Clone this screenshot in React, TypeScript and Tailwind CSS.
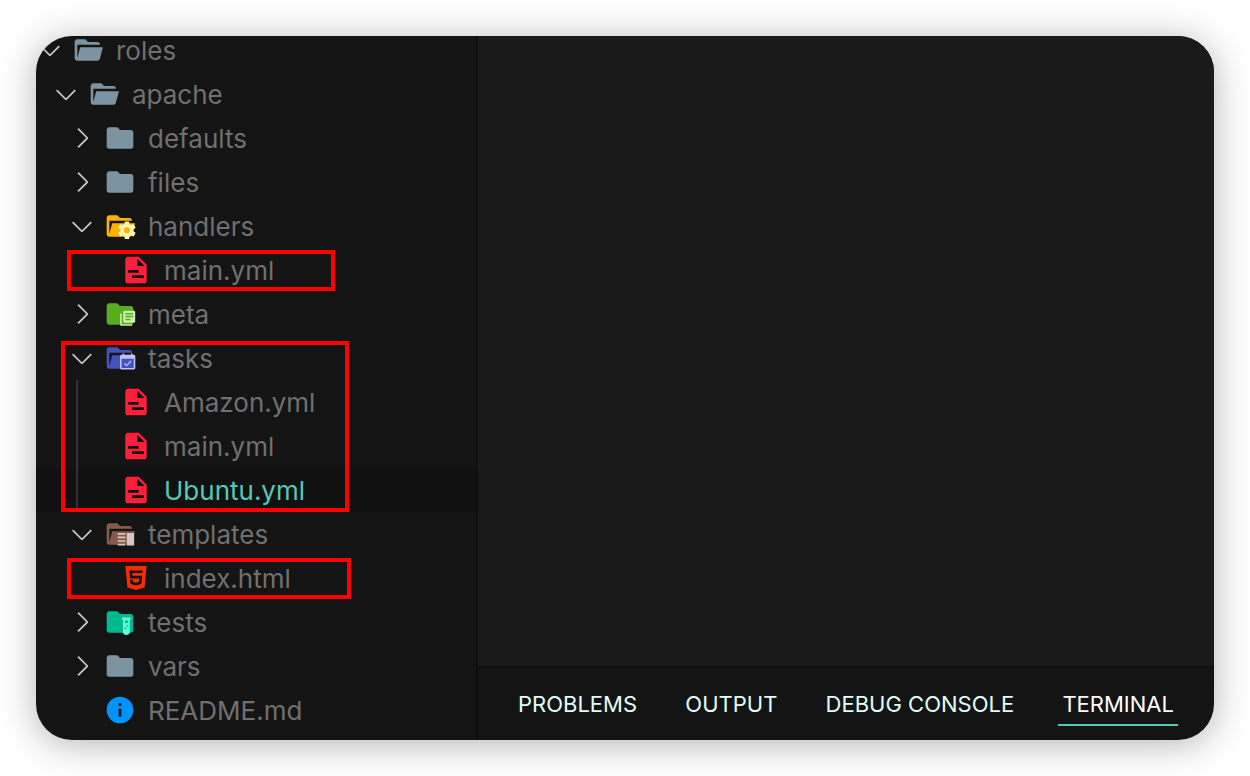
import React, { useState } from 'react';
import clsx from 'clsx';

type IconName =
  | 'folder' | 'folder-open' | 'handlers' | 'meta' | 'tasks' | 'templates' | 'tests' | 'yaml' | 'html' | 'readme';

interface TreeNode {
  name: string;
  icon: IconName;
  open?: boolean;
  leaf?: boolean;
  selected?: boolean;
  guide?: boolean;
  frame?: string;
  children?: TreeNode[];
}

const FOLDER = 'M10 4H4c-1.11 0-2 .89-2 2v12a2 2 0 0 0 2 2h16a2 2 0 0 0 2-2V8c0-1.11-.9-2-2-2h-8l-2-2z';
const FOLDER_OPEN =
  'M19 20H4c-1.11 0-2-.9-2-2V6c0-1.11.89-2 2-2h6l2 2h7a2 2 0 0 1 2 2H4v10l2.14-8h17.07l-2.28 8.5c-.23.87-1.01 1.5-1.93 1.5z';
const COG =
  'M12 15.5A3.5 3.5 0 0 1 8.5 12 3.5 3.5 0 0 1 12 8.5a3.5 3.5 0 0 1 3.5 3.5 3.5 3.5 0 0 1-3.5 3.5m7.43-2.53c.04-.32.07-.64.07-.97 0-.33-.03-.66-.07-1l2.11-1.63c.19-.15.24-.42.12-.64l-2-3.46c-.12-.22-.39-.31-.61-.22l-2.49 1c-.52-.39-1.06-.73-1.69-.98l-.37-2.65A.506.506 0 0 0 14 2h-4c-.25 0-.46.18-.5.42l-.37 2.65c-.63.25-1.17.59-1.69.98l-2.49-1c-.22-.09-.49 0-.61.22l-2 3.46c-.13.22-.07.49.12.64L4.57 11c-.04.34-.07.67-.07 1 0 .33.03.65.07.97l-2.11 1.66c-.19.15-.25.42-.12.64l2 3.46c.12.22.39.3.61.22l2.49-1.01c.52.4 1.06.74 1.69.99l.37 2.65c.04.24.25.42.5.42h4c.25 0 .46-.18.5-.42l.37-2.65c.63-.26 1.17-.59 1.69-.99l2.49 1.01c.22.08.49 0 .61-.22l2-3.46c.12-.22.07-.49-.12-.64l-2.11-1.66z';

const ICONS: Record<IconName, React.ReactNode> = {
  folder: <path d={FOLDER} fill="#7c94a1" />,
  'folder-open': <path d={FOLDER_OPEN} fill="#7c94a1" />,
  handlers: (
    <>
      <path d={FOLDER_OPEN} fill="#ffb300" />
      <path d={COG} fill="#fff6b0" transform="translate(9.3 7.3) scale(.66)" />
    </>
  ),
  meta: (
    <>
      <path d={FOLDER} fill="#58ad1c" />
      <path
        fill="#cdeeb4"
        fillRule="evenodd"
        d="M15.4 9.5h7c.55 0 1 .45 1 1v7c0 .55-.45 1-1 1h-7c-.55 0-1-.45-1-1v-7c0-.55.45-1 1-1zm.6 1.8v1.1h5.8v-1.1zm0 2.1v1.1h5.8v-1.1zm0 2.1v1.1h3.8v-1.1zM12.1 11.7h1.2v7.9h7.9v1.2h-8.1c-.55 0-1-.45-1-1z"
      />
    </>
  ),
  tasks: (
    <>
      <path d={FOLDER_OPEN} fill="#4552bd" />
      <path fill="#4552bd" d="M13 12h9.500v8H13z" />
      <path
        fill="#bcc4ec"
        fillRule="evenodd"
        d="M14 8.6h1.2v1h5V8.6h1.2v1h1c.6 0 1.1.5 1.1 1.1v8.8c0 .6-.5 1.1-1.1 1.1h-9.300c-.6 0-1.1-.5-1.1-1.100v-8.800c0-.6.5-1.1 1.100-1.100h.9zm-.8 4v6.900h9.100v-6.900z"
      />
      <path d="m15.300 16 1.700 1.700 3.300-3.400" fill="none" stroke="#bcc4ec" strokeWidth="1" />
    </>
  ),
  templates: (
    <>
      <path d={FOLDER_OPEN} fill="#85594d" />
      <path
        fill="#d5c7c3"
        d="M17.100 11.200h5.500v9.400h-5.500zM10.300 11.200h5.700v1.300h-5.700zM10.300 13.900h5.700v1.300h-5.700zM10.300 16.600h5.700v1.300h-5.700zM10.300 19.300h5.700v1.300h-5.700z"
      />
    </>
  ),
  tests: (
    <>
      <path d={FOLDER} fill="#00b98f" />
      <path
        fill="#62fbd9"
        fillRule="evenodd"
        d="M13.400 8.600h6.800v1.600h-.8v9a2.600 2.600 0 0 1-5.200 0v-9h-.8zm2.300 2.200v2h2.200v-2zm1.300 3.400v1.200h1.200v-1.200zm-1.500 2v1.200h1.200v-1.200z"
      />
    </>
  ),
  yaml: (
    <path
      fill="#ff1f3a"
      d="M13 9h5.500L13 3.500V9M6 2h8l6 6v12a2 2 0 0 1-2 2H6a2 2 0 0 1-2-2V4c0-1.110.89-2 2-2m12 16v-2H9v2h9m-4-4v-2H6v2h8z"
    />
  ),
  html: (
    <path
      fill="#fa2a08"
      d="M12 17.560l4.070-1.130.55-6.100H9.380L9.200 8.300h7.600l.2-1.990H7l.56 6.010h6.890l-.23 2.580-2.220.6-2.220-.6-.14-1.660h-2l.29 3.190L12 17.560M4.070 3h15.860L18.500 19.200 12 21l-6.500-1.800L4.070 3z"
    />
  ),
  readme: (
    <path
      fill="#0092ff"
      d="M13 9h-2V7h2m0 10h-2v-6h2m-1-9A10 10 0 0 0 2 12a10 10 0 0 0 10 10 10 10 0 0 0 10-10A10 10 0 0 0 12 2z"
    />
  ),
};

const TREE: TreeNode[] = [
  {
    name: 'roles', icon: 'folder-open', open: true, children: [
      {
        name: 'apache', icon: 'folder-open', open: true, children: [
          { name: 'defaults', icon: 'folder' },
          { name: 'files', icon: 'folder' },
          {
            name: 'handlers', icon: 'handlers', open: true, children: [
              { name: 'main.yml', icon: 'yaml', leaf: true, frame: 'left-[33px] top-0.5 h-[41px] w-[268px]' },
            ],
          },
          { name: 'meta', icon: 'meta' },
          {
            name: 'tasks', icon: 'tasks', open: true, guide: true, frame: 'left-[27px] top-[5px] bottom-0 w-72', children: [
              { name: 'Amazon.yml', icon: 'yaml', leaf: true },
              { name: 'main.yml', icon: 'yaml', leaf: true },
              { name: 'Ubuntu.yml', icon: 'yaml', leaf: true, selected: true },
            ],
          },
          {
            name: 'templates', icon: 'templates', open: true, children: [
              { name: 'index.html', icon: 'html', leaf: true, frame: 'left-[33px] top-0.5 h-[41px] w-[284px]' },
            ],
          },
          { name: 'tests', icon: 'tests' },
          { name: 'vars', icon: 'folder' },
          { name: 'README.md', icon: 'readme', leaf: true },
        ],
      },
    ],
  },
];

const INDENT = ['pl-0', 'pl-4', 'pl-8', 'pl-12'];

function Chevron({ open }: { open?: boolean }) {
  return (
    <svg viewBox="0 0 16 16" className="size-8 shrink-0" fill="#c8c8c8" aria-hidden="true">
      <path
        d={
          open
            ? 'M7.976 10.072l4.357-4.357.62.618L8.284 11h-.618L3 6.333l.619-.618 4.357 4.357z'
            : 'M10.072 8.024L5.715 3.667l.618-.62L11 7.716v.618L6.333 13l-.618-.619 4.357-4.357z'
        }
      />
    </svg>
  );
}

function TreeItem({ node, depth }: { node: TreeNode; depth: number }) {
  const [open, setOpen] = useState(Boolean(node.open));
  return (
    <li className="relative">
      <button
        type="button"
        onClick={() => setOpen(!open)}
        className={clsx(
          'flex h-11 w-full items-center text-left text-[26px] leading-7',
          INDENT[depth],
          node.selected ? 'bg-[#111111] text-[#56c8b8]' : 'text-[#707070]',
        )}
      >
        {node.leaf ? <span className="size-8 shrink-0" /> : <Chevron open={open} />}
        <svg viewBox="0 0 24 24" className="ml-1.5 mr-3 size-8 shrink-0" aria-hidden="true">
          {ICONS[node.icon]}
        </svg>
        <span className="pt-0.5">{node.name}</span>
      </button>
      {open && node.children && (
        <ul className="relative">
          {node.children.map((child) => (
            <TreeItem key={child.name} node={child} depth={depth + 1} />
          ))}
          {node.guide && <li className="absolute inset-y-0 left-[42px] w-0.5 bg-[#333333]" aria-hidden="true" />}
        </ul>
      )}
      {node.frame && (
        <div className={clsx('pointer-events-none absolute border-4 border-[#ff0000]', node.frame)} />
      )}
    </li>
  );
}

const TABS = ['PROBLEMS', 'OUTPUT', 'DEBUG CONSOLE', 'TERMINAL'];

export default function App() {
  const [tab, setTab] = useState('TERMINAL');
  return (
    <div className="flex min-h-screen bg-white p-9 font-['Inter',sans-serif]">
      <div className="flex flex-1 overflow-hidden rounded-[36px] bg-[#141414] shadow-[0_4px_36px_rgba(0,0,0,0.3)]">
        <nav aria-label="Explorer" className="w-[442px] shrink-0 border-r-2 border-[#0e0e0e] pb-2">
          <ul className="-ml-0.5 -mt-2">
            {TREE.map((node) => (
              <TreeItem key={node.name} node={node} depth={0} />
            ))}
          </ul>
        </nav>
        <div className="flex min-w-0 flex-1 flex-col">
          <main className="flex-1 bg-[#1a1a1a]" />
          <div role="tablist" className="flex justify-between border-t-2 border-[#0e0e0e] pb-3.5 pl-9 pr-9 pt-4">
            {TABS.map((name) => (
              <button
                key={name}
                type="button"
                role="tab"
                aria-selected={tab === name}
                onClick={() => setTab(name)}
                className={clsx(
                  'h-[42px] whitespace-nowrap border-b-2 px-1 text-[22px] leading-10',
                  tab === name ? 'border-[#56c8b8] text-white' : 'border-transparent text-[#e0fffc]',
                )}
              >
                {name}
              </button>
            ))}
          </div>
        </div>
      </div>
    </div>
  );
}
